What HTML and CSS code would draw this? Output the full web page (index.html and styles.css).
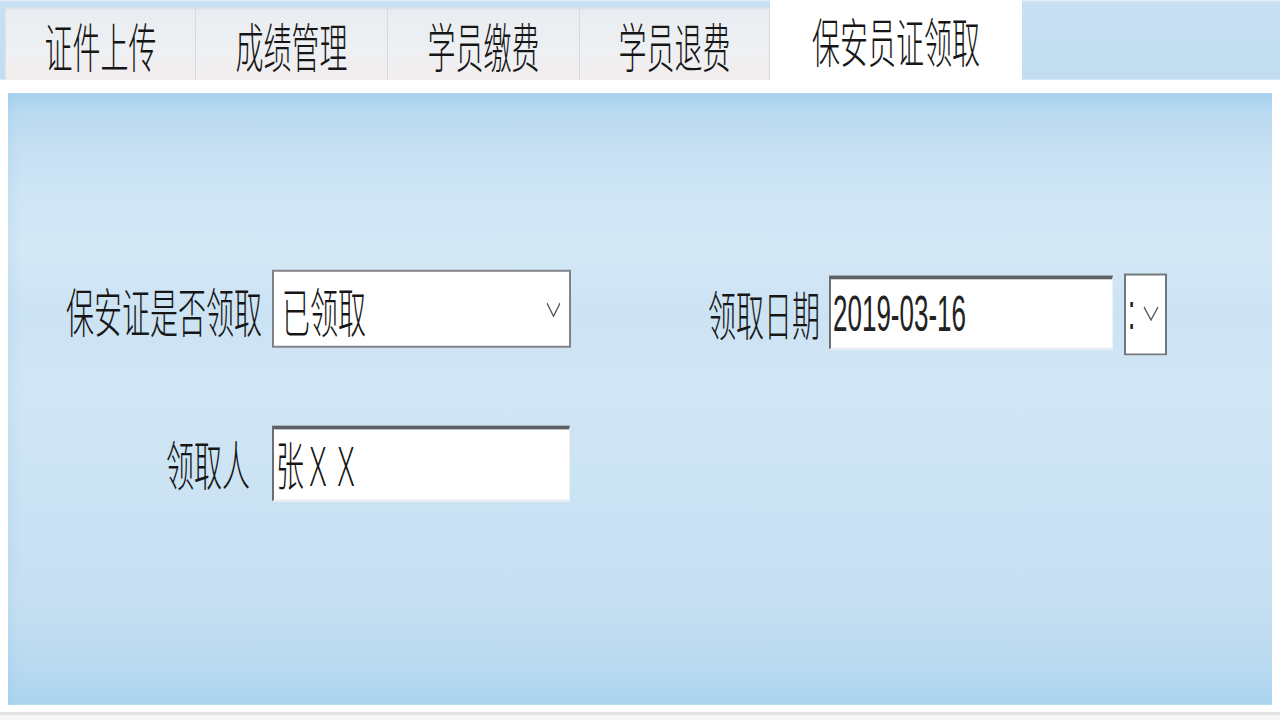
FILE: index.html
```html
<!DOCTYPE html>
<html lang="zh-CN">
<head>
<meta charset="utf-8">
<title>保安员证领取</title>
<link rel="stylesheet" href="styles.css">
</head>
<body>
<div class="stage">
  <div class="tabstrip">
    <div class="tab first">证件上传</div>
    <div class="tab">成绩管理</div>
    <div class="tab">学员缴费</div>
    <div class="tab t4">学员退费</div>
    <div class="tab active">保安员证领取</div>
  </div>
  <div class="frame">
    <div class="panel">
      <div class="row row1">
        <div class="lbl lbl-status">保安证是否领取</div>
        <div class="combo">
          <span class="val">已领取</span>
          <svg class="chev" viewBox="0 0 15 8" width="15" height="8"><polyline points="1,0.6 7.5,7.4 14,0.6" fill="none" stroke="#5a5a5a" stroke-width="1.1"/></svg>
        </div>
        <div class="lbl lbl-date">领取日期</div>
        <div class="textbox date">2019-03-16</div>
        <div class="dtbtn">
          <span class="colon">:</span>
          <svg class="chev" viewBox="0 0 16 8" width="16" height="8"><polyline points="1,0.6 8,7.4 15,0.6" fill="none" stroke="#5a5a5a" stroke-width="1.1"/></svg>
        </div>
      </div>
      <div class="row row2">
        <div class="lbl lbl-person">领取人</div>
        <div class="textbox person">张ＸＸ</div>
      </div>
    </div>
  </div>
  <div class="footer"></div>
</div>
</body>
</html>
```
FILE: styles.css
```css
html, body {
  margin: 0;
  padding: 0;
  background: #ffffff;
  overflow: hidden;
}
body {
  width: 1280px;
  height: 720px;
  font-family: "Noto Sans CJK SC", "Noto Sans", sans-serif;
  font-weight: 300;
  color: #1b1b1b;
}
.stage {
  width: 1280px;
  height: 378.95px;
  transform: scaleY(1.9);
  transform-origin: 0 0;
}

/* ---------- tabs ---------- */
.tabstrip {
  height: 42.1px;
  display: flex;
  align-items: flex-end;
  padding-left: 5px;
  background: linear-gradient(#e6eff7 0, #c7e0f3 1.2px, #c2ddf1 100%);
}
.tab {
  box-sizing: border-box;
  height: 37.9px;
  width: 192px;
  display: flex;
  align-items: center;
  justify-content: center;
  padding-top: 1px;
  font-size: 28px;
  line-height: 1;
  color: #161616;
  background: linear-gradient(#e9edf1 0%, #eef0f3 60%, #f3eded 100%);
  border-top: 1px solid #dfe3e8;
  border-right: 1px solid #d6dadf;
}
.tab.first {
  width: 191px;
  border-left: 1px solid #dfe3e8;
}
.tab.t4 {
  width: 190px;
}
.tab.active {
  width: 252px;
  height: 43.4px;
  margin-bottom: -1.3px;
  padding-top: 0;
  padding-bottom: 1px;
  background: #ffffff;
  border: none;
}

/* ---------- frame & panel ---------- */
.frame {
  padding: 6.8px 8px 0;
  background: #ffffff;
}
.panel {
  box-sizing: border-box;
  height: 322.2px;
  padding-top: 93.2px;
  background:
    linear-gradient(to right, rgba(150, 200, 235, 0.22) 0, rgba(150, 200, 235, 0) 12px),
    linear-gradient(to bottom,
      #a6d1ee 0%,
      #b9daf1 3%,
      #c6e0f3 9%,
      #d0e6f5 18%,
      #d4e8f6 26%,
      #cce3f4 36%,
      #d1e6f5 48%,
      #cde4f4 60%,
      #c9e1f3 72%,
      #c5dff2 84%,
      #b8d9f0 94%,
      #a9d3ee 100%);
}

/* ---------- form rows ---------- */
.row {
  display: flex;
  align-items: flex-start;
}
.row1 {
  height: 44.7px;
}
.row2 {
  margin-top: 36.9px;
}
.lbl {
  display: flex;
  align-items: center;
  justify-content: flex-end;
  font-size: 28px;
  line-height: 1;
  color: #161616;
  white-space: nowrap;
}
.lbl-status {
  width: 254px;
  height: 41.1px;
  margin-right: 10px;
}
.lbl-date {
  width: 249px;
  height: 38.9px;
  margin-top: 3.2px;
  margin-right: 9px;
}
.lbl-person {
  width: 242px;
  height: 40.5px;
  margin-right: 22px;
}

.combo {
  box-sizing: border-box;
  width: 299px;
  height: 41.1px;
  display: flex;
  align-items: center;
  justify-content: space-between;
  padding: 0 8px 0 8px;
  background: #ffffff;
  border-style: solid;
  border-color: #7d8389;
  border-width: 1px 2px;
  font-size: 28px;
  line-height: 1;
}
.combo .val {
  color: #161616;
}
.chev {
  display: block;
  flex: none;
}

.textbox {
  box-sizing: border-box;
  display: flex;
  align-items: center;
  background: #ffffff;
  border-style: solid;
  border-top-width: 2.5px;
  border-left-width: 2px;
  border-right-width: 1px;
  border-bottom-width: 1px;
  border-top-color: #5c6064;
  border-left-color: #6b6f73;
  border-right-color: #eef2f5;
  border-bottom-color: #e3ecf3;
  color: #161616;
}
.date {
  width: 284px;
  height: 38.9px;
  margin-top: 3.2px;
  padding-left: 2px;
  font-family: "Liberation Sans", Arial, sans-serif;
  font-weight: 400;
  font-size: 26px;
  line-height: 1;
  color: #222222;
}
.person {
  width: 298px;
  height: 40.5px;
  padding-left: 2px;
  font-size: 28px;
  line-height: 1;
}

.dtbtn {
  box-sizing: border-box;
  width: 43px;
  height: 42.6px;
  margin-top: 2.1px;
  margin-left: 11px;
  display: flex;
  align-items: center;
  padding-left: 2px;
  gap: 8px;
  background: #ffffff;
  border-style: solid;
  border-color: #70777d;
  border-width: 1px 2px;
}
.dtbtn .colon {
  font-family: "Liberation Sans", Arial, sans-serif;
  font-weight: 400;
  font-size: 26px;
  line-height: 1;
  color: #1b1b1b;
  margin-top: -3px;
}

/* ---------- bottom ---------- */
.footer {
  height: 7.9px;
  background: linear-gradient(#ffffff 0, #ffffff 3.6px, #e2e2e2 3.6px, #e2e2e2 5.2px, #f7f7f7 5.2px);
}
```
